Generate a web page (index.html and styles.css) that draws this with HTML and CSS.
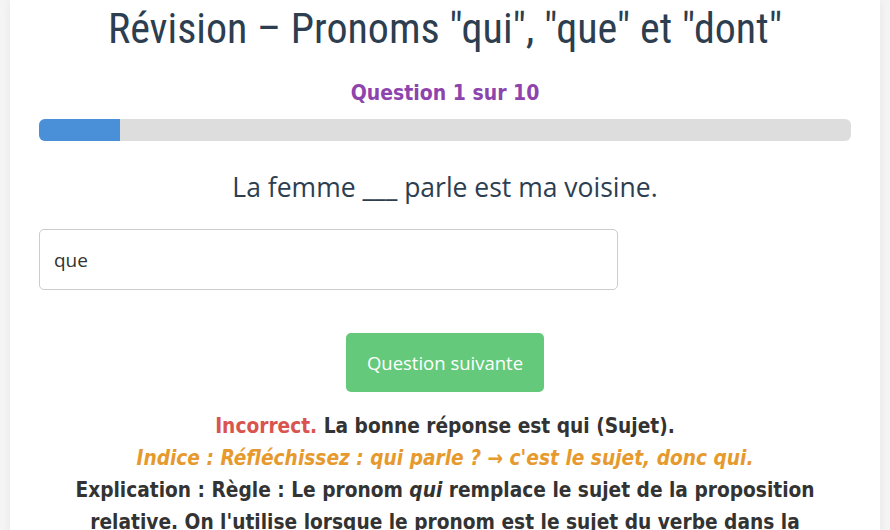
FILE: index.html
```html
<!DOCTYPE html>
<html lang="fr">
<head>
  <meta charset="UTF-8">
  <title>Révision – Pronoms</title>
  <link rel="stylesheet" href="styles.css">
</head>
<body>

  <div class="container">
    <h1>Révision – Pronoms "qui", "que" et "dont"</h1>

    <p id="progress-text">Question 1 sur 10</p>
    <div class="progress-bar">
      <div class="progress-fill" style="width: 10%"></div>
    </div>

    <p id="question">La femme ___ parle est ma voisine.</p>

    <input type="text" id="answer-input" value="que" />

    <div class="button-row">
      <button id="next-button">Question suivante</button>
    </div>

    <div id="feedback">
      <p><span class="incorrect">Incorrect.</span> La bonne réponse est qui (Sujet).</p>
      <p class="hint">Indice : Réfléchissez : qui parle ? → c'est le sujet, donc qui.</p>
      <p class="explanation">Explication : Règle : Le pronom <em>qui</em> remplace le sujet de la proposition relative. On l'utilise lorsque le pronom est le sujet du verbe dans la proposition relative.</p>
    </div>
  </div>

</body>
</html>
```

FILE: styles.css
```css
body {
  margin: 0;
  padding: 0 10px;
  background: #f4f4f4;
  font-family: "Open Sans", sans-serif;
  color: #2c3e50;
}

.container {
  background: white;
  padding: 0 29px 30px;
  box-shadow: 0 0 8px rgba(0, 0, 0, 0.06);
  min-height: 530px;
}

h1 {
  margin: 0;
  padding-top: 4px;
  font-family: "Roboto Condensed", "Roboto", sans-serif;
  font-stretch: condensed;
  font-weight: 400;
  font-size: 42px;
  text-align: center;
  color: #2c3e50;
}

#progress-text {
  margin: 28px 0 14px;
  font-family: "DejaVu Sans Condensed", "DejaVu Sans", sans-serif;
  font-weight: bold;
  font-size: 21px;
  color: #8e44ad;
  text-align: center;
}

.progress-bar {
  height: 22px;
  background: #dddddd;
  border-radius: 6px;
  overflow: hidden;
}

.progress-fill {
  height: 100%;
  background: #4a90d9;
}

#question {
  margin: 28px 0 24px;
  font-size: 26.5px;
  line-height: 36px;
  text-align: center;
}

#answer-input {
  display: block;
  width: 579px;
  height: 61px;
  box-sizing: border-box;
  padding: 0 14px;
  border: 1px solid #cccccc;
  border-radius: 5px;
  font-family: "Open Sans", sans-serif;
  font-size: 19px;
  color: #333;
}

.button-row {
  display: flex;
  justify-content: center;
  margin-top: 43px;
}

#next-button {
  background: #64c97a;
  border: none;
  color: white;
  width: 198px;
  height: 59px;
  border-radius: 5px;
  font-family: "Open Sans", sans-serif;
  font-size: 18.5px;
  cursor: pointer;
}

#feedback {
  margin-top: 18px;
  font-family: "DejaVu Sans Condensed", "DejaVu Sans", sans-serif;
  font-weight: bold;
  font-size: 20.7px;
  line-height: 32px;
  text-align: center;
  color: #333;
}

#feedback p {
  margin: 0;
}

.incorrect {
  color: #d9534f;
}

.hint {
  color: #e69a2e;
  font-style: italic;
}
```
